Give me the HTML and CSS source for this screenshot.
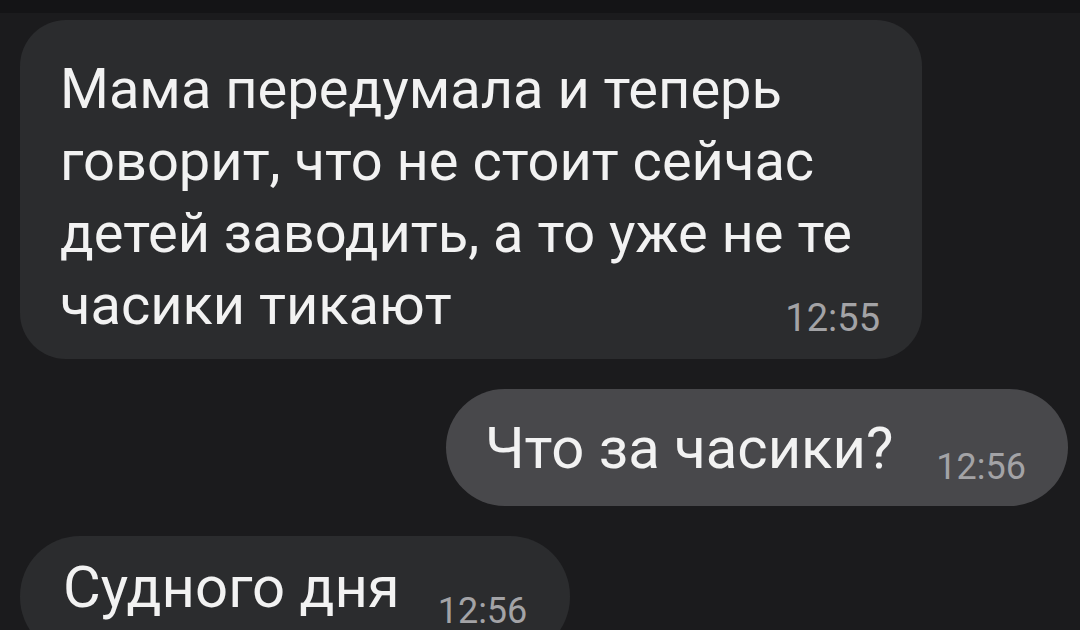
FILE: index.html
```html
<!DOCTYPE html>
<html lang="ru">
<head>
  <meta charset="UTF-8">
  <title>Часики</title>
  <link rel="stylesheet" href="styles.css">
</head>
<body>
  <div class="topbar"></div>

  <div class="chat">
    <div class="row">
      <div class="bubble in long">
        <p class="text">Мама передумала и теперь<br>говорит, что не стоит сейчас<br>детей заводить, а то уже не те<br>часики тикают<span class="time">12:55</span></p>
      </div>
    </div>

    <div class="row out">
      <div class="bubble mine">
        <span class="text">Что за часики?</span>
        <span class="time">12:56</span>
      </div>
    </div>

    <div class="row">
      <div class="bubble in short">
        <span class="text">Судного дня</span>
        <span class="time">12:56</span>
      </div>
    </div>
  </div>
</body>
</html>
```

FILE: styles.css
```css
body {
  margin: 0;
  padding: 0;
  height: 630px;
  overflow: hidden;
  background-color: #1b1b1d;
  color: #f2f2f2;
  font-family: Roboto, "Noto Sans", sans-serif;
}

.topbar {
  height: 13px;
  background: #141416;
}

.chat {
  display: flex;
  flex-direction: column;
  gap: 30px;
  padding: 7px 12px 0 20px;
}

.row {
  display: flex;
}

.row.out {
  justify-content: flex-end;
}

.bubble {
  background: #2b2c2e;
  box-sizing: border-box;
}

.time {
  color: #a3a3a6;
  font-size: 36px;
  line-height: 36px;
}

/* первое длинное сообщение */
.long {
  width: 902px;
  border-radius: 46px;
  padding: 33px 42px 18px 40px;
}

.long .text {
  margin: 0;
  font-size: 56px;
  line-height: 72px;
}

.long .time {
  float: right;
  font-size: 38px;
  line-height: 38px;
  margin-top: 30px;
}

/* короткие сообщения в одну строку */
.mine,
.short {
  display: flex;
  align-items: baseline;
  border-radius: 60px;
}

.mine .text,
.short .text {
  font-size: 58px;
  line-height: 80px;
}

.mine {
  gap: 43px;
  background: #48484b;
  padding: 19px 42px 18px 39px;
}

.mine .time {
  position: relative;
  top: 11px;
}

.short {
  gap: 38px;
  padding: 11px 43px 30px 43px;
}

.short .time {
  position: relative;
  top: 16px;
}
```
